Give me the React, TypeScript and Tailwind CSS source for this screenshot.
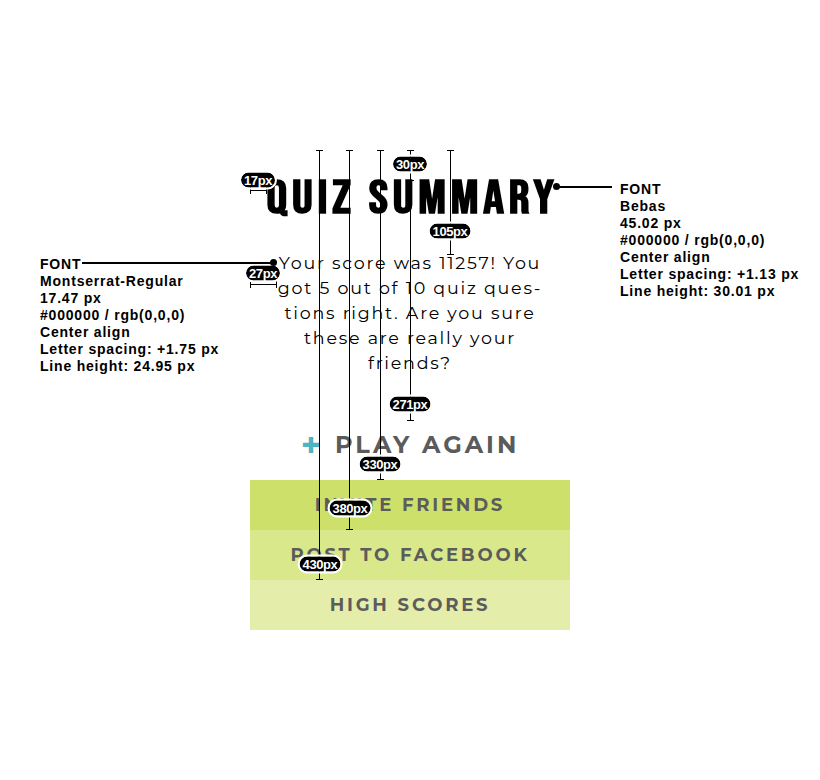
const spec = "font-['Liberation_Sans',Arial,sans-serif] text-[14px] font-bold leading-[17px] tracking-[0.8px] text-black";
const body = "font-['Montserrat','Open_Sans',sans-serif]";

function Badge({ x, y, label }: { x: number; y: number; label: string }) {
  return (
    <span
      className="absolute -translate-x-1/2 -translate-y-1/2 rounded-full bg-black px-[3px] text-[13px] font-bold leading-[15px] tracking-[-0.4px] text-white outline outline-2 outline-white font-['Liberation_Sans',Arial,sans-serif]"
      style={{ left: x, top: y }}
    >
      {label}
    </span>
  );
}

function VLine({ x, top, len, mid }: { x: number; top: number; len: number; mid?: number }) {
  return (
    <div className="absolute w-px bg-black" style={{ left: x, top, height: len }}>
      <div className="absolute -left-[3px] top-0 h-px w-[7px] bg-black" />
      {mid !== undefined && <div className="absolute -left-[3px] h-px w-[7px] bg-black" style={{ top: mid }} />}
      <div className="absolute -left-[3px] bottom-0 h-px w-[7px] bg-black" />
    </div>
  );
}

function HLine({ x, y, len }: { x: number; y: number; len: number }) {
  return (
    <div className="absolute h-px bg-black" style={{ left: x, top: y, width: len }}>
      <div className="absolute left-0 -top-[3px] h-[7px] w-px bg-black" />
      <div className="absolute right-0 -top-[3px] h-[7px] w-px bg-black" />
    </div>
  );
}

function FontSpec({ lines }: { lines: string[] }) {
  return (
    <div className={spec}>
      {lines.map((l) => (
        <div key={l} className="whitespace-nowrap">{l}</div>
      ))}
    </div>
  );
}

export default function App() {
  return (
    <div className="relative h-[780px] w-[820px] overflow-hidden bg-white">
      <div className="flex pl-[40px]">
        {/* left spec */}
        <div className="w-[210px] pt-[256px]">
          <FontSpec
            lines={[
              'FONT',
              'Montserrat-Regular',
              '17.47 px',
              '#000000 / rgb(0,0,0)',
              'Center align',
              'Letter spacing: +1.75 px',
              'Line height: 24.95 px',
            ]}
          />
        </div>

        {/* screen */}
        <div className="flex w-[320px] flex-col items-center pt-[175px]">
          <h1 className="flex h-[50px] items-center whitespace-nowrap pl-[4px] text-[46px] font-bold leading-none tracking-[4.3px] text-black scale-x-[1.12] font-['Bebas_Neue','Liberation_Sans_Narrow','DejaVu_Sans_Condensed',sans-serif]">
            QUIZ SUMMARY
          </h1>
          <p className={`mt-[25px] whitespace-nowrap text-center text-[17.5px] leading-[25px] tracking-[1.75px] text-black ${body}`}>
            Your score was 11257! You
            <br />
            got 5 out of 10 quiz ques-
            <br />
            tions right. Are you sure
            <br />
            these are really your
            <br />
            friends?
          </p>
          <button className={`mt-[55px] flex h-[30px] items-center gap-[14px] ${body}`}>
            <span className="text-[34px] font-bold leading-none text-[#4fb3c2]">+</span>
            <span className="text-[24px] font-bold tracking-[3px] text-[#5b5b5b]">PLAY AGAIN</span>
          </button>
          <div className={`mt-[20px] flex w-full flex-col text-[18px] font-bold tracking-[2.8px] text-[#5c5c5c] ${body}`}>
            <div className="flex h-[50px] items-center justify-center bg-[#cde16a]">INVITE FRIENDS</div>
            <div className="flex h-[50px] items-center justify-center bg-[#d9e88a]">POST TO FACEBOOK</div>
            <div className="flex h-[50px] items-center justify-center bg-[#e4eeaa]">HIGH SCORES</div>
          </div>
        </div>

        {/* right spec */}
        <div className="ml-[50px] pt-[181px]">
          <FontSpec
            lines={[
              'FONT',
              'Bebas',
              '45.02 px',
              '#000000 / rgb(0,0,0)',
              'Center align',
              'Letter spacing: +1.13 px',
              'Line height: 30.01 px',
            ]}
          />
        </div>
      </div>

      {/* redline annotations */}
      <VLine x={319} top={150} len={430} />
      <VLine x={349} top={150} len={380} />
      <VLine x={380} top={150} len={330} />
      <VLine x={410} top={150} len={271} mid={30} />
      <VLine x={450} top={150} len={105} />
      <HLine x={250} y={190} len={17} />
      <HLine x={250} y={284} len={27} />

      <Badge x={258} y={180} label="17px" />
      <Badge x={410} y={164} label="30px" />
      <Badge x={450} y={231} label="105px" />
      <Badge x={263} y={273} label="27px" />
      <Badge x={410} y={404} label="271px" />
      <Badge x={380} y={464} label="330px" />
      <Badge x={350} y={508} label="380px" />
      <Badge x={320} y={564} label="430px" />

      <div className="absolute left-[82px] top-[262px] h-[2px] w-[191px] bg-black" />
      <div className="absolute left-[270px] top-[259px] h-[7px] w-[7px] rounded-full bg-black" />
      <div className="absolute left-[556px] top-[186px] h-[2px] w-[56px] bg-black" />
      <div className="absolute left-[553px] top-[183px] h-[7px] w-[7px] rounded-full bg-black" />
    </div>
  );
}
